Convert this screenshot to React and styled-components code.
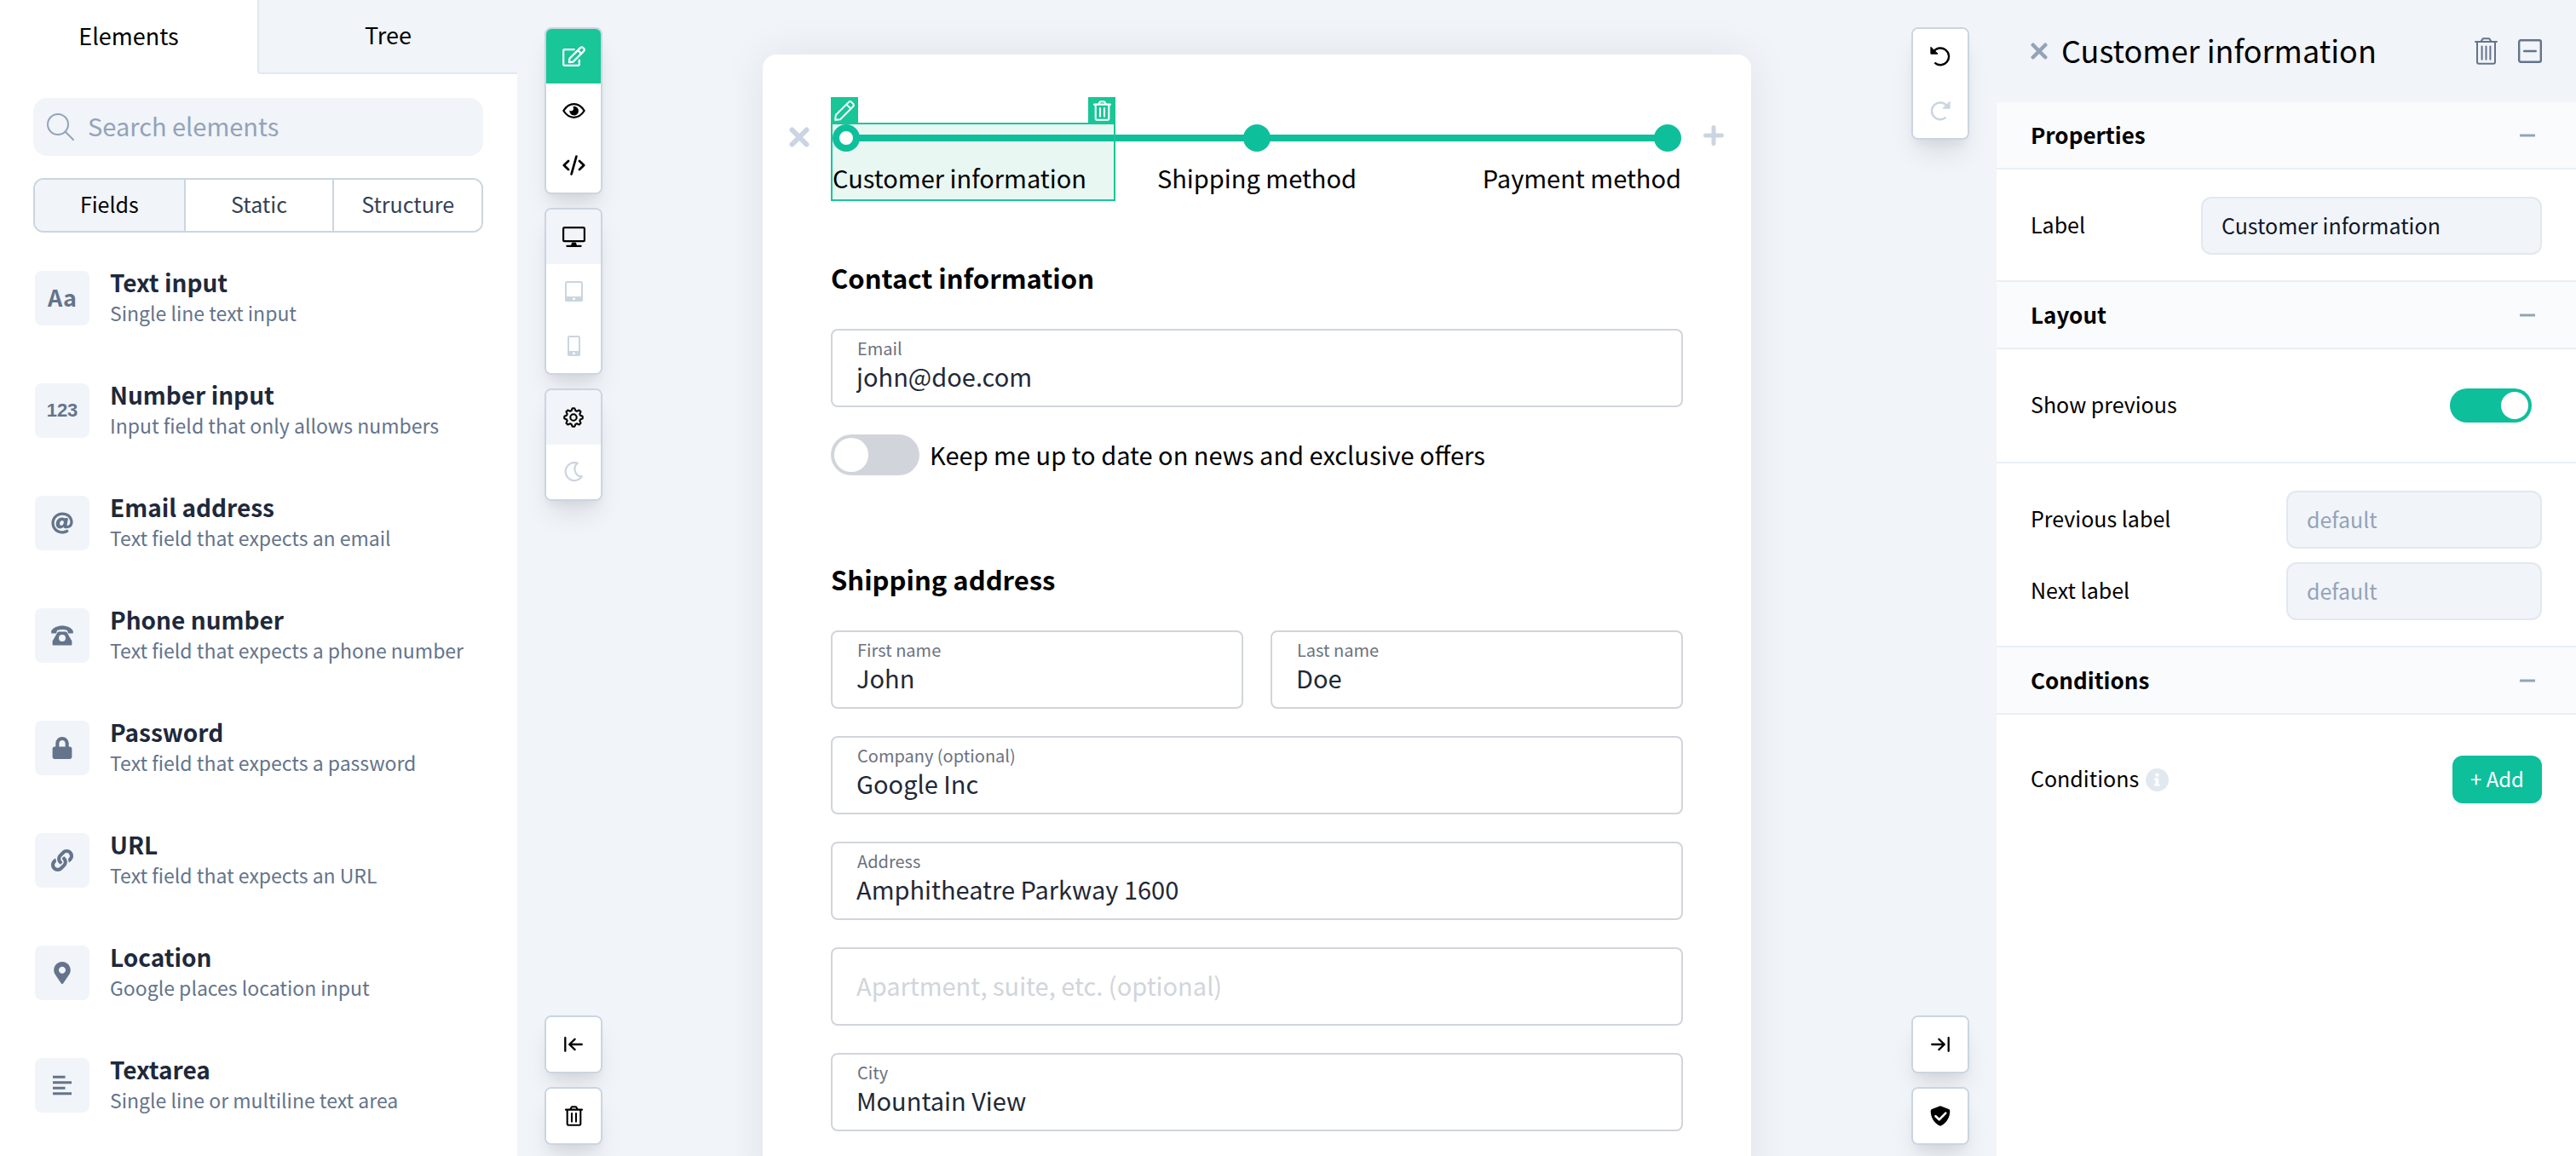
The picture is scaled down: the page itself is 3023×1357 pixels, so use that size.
import React from "react";
import styled, { createGlobalStyle, css } from "styled-components";
import { FaAt, FaLock, FaLink, FaMapMarkerAlt } from "react-icons/fa";

const color = {
  page: "#f1f4f9",
  ink: "#000000",
  title: "#1e293b",
  value: "#1f2937",
  muted: "#64748b",
  soft: "#94a3b8",
  line: "#cbd5e1",
  lineLight: "#e2e8f0",
  divider: "#e9eff5",
  band: "#fafbfd",
  fieldLine: "#d1d5db",
  fieldLabel: "#6b7280",
  brand: "#0ebf9b",
  select: "#18c697",
  selectTint: "#e8f7f2",
};

const GlobalStyle = createGlobalStyle`
  *, *::before, *::after { box-sizing: border-box; }
  body {
    margin: 0;
    background: ${color.page};
    color: ${color.ink};
    font-family: "Noto Sans CJK SC", "Source Sans 3", "Open Sans", sans-serif;
  }
  button, input { font: inherit; color: inherit; margin: 0; }
  button { cursor: pointer; border: 0; padding: 0; background: none; }
  input:focus-visible, button:focus-visible { outline: 2px solid ${color.brand}; }
  svg { display: block; flex: none; }
  h1, h2, ul, ol { margin: 0; padding: 0; }
  ul, ol { list-style: none; }
`;

/* ---------- shell ---------- */

const Shell = styled.div`
  display: grid;
  grid-template-columns: 607px minmax(0, 1fr) 680px;
  height: 100vh;
  overflow: hidden;
`;

const Workspace = styled.main`
  display: flex;
  justify-content: space-between;
  padding: 32px 32px 0;
  overflow: hidden;
`;

/* ---------- left panel ---------- */

const Sidebar = styled.aside`
  background: #fff;
  overflow: hidden;
`;

const Tabs = styled.div`
  display: grid;
  grid-template-columns: 302px 1fr;
  height: 87px;
`;

const Tab = styled.button`
  padding-bottom: 4px;
  font-size: 27px;
  line-height: 40px;
  ${(p) =>
    !p.$active &&
    css`
      background: ${color.page};
      border-left: 2px solid ${color.lineLight};
      border-bottom: 2px solid ${color.lineLight};
      border-bottom-left-radius: 4px;
    `}
`;

const SidebarBody = styled.div`
  padding: 28px 40px 0 39px;
`;

const Search = styled.label`
  display: flex;
  align-items: center;
  gap: 16px;
  height: 68px;
  padding: 0 16px;
  border-radius: 16px;
  background: ${color.page};
  color: ${color.soft};
`;

const SearchInput = styled.input`
  flex: 1;
  min-width: 0;
  padding: 0 0 4px;
  border: 0;
  background: none;
  font-size: 29px;
  &::placeholder { color: ${color.soft}; opacity: 1; }
`;

const Segments = styled.div`
  display: grid;
  grid-template-columns: repeat(3, 1fr);
  height: 64px;
  margin: 26px 0 41px;
  border: 2px solid ${color.line};
  border-radius: 12px;
  overflow: hidden;
`;

const Segment = styled.button`
  padding-bottom: 4px;
  font-size: 25px;
  color: ${(p) => (p.$active ? color.ink : "#334155")};
  background: ${(p) => (p.$active ? color.page : "#fff")};
  & + & { border-left: 2px solid ${color.line}; }
`;

const ElementList = styled.ul`
  display: flex;
  flex-direction: column;
  gap: 60px;
  padding: 0 2px;
`;

const ElementItem = styled.li`
  display: flex;
  align-items: center;
  gap: 24px;
  height: 72px;
`;

const ElementCopy = styled.div`
  padding-bottom: 2px;
`;

const ElementIcon = styled.span`
  display: grid;
  place-items: center;
  flex: none;
  width: 64px;
  height: 64px;
  border-radius: 8px;
  background: ${color.page};
  color: ${color.muted};
`;

const Glyph = styled.span`
  font-family: ${(p) => (p.$digits ? '"Liberation Sans", sans-serif' : "inherit")};
  font-size: ${(p) => (p.$digits ? 22 : 27)}px;
  font-weight: 700;
  line-height: 28px;
  padding-bottom: ${(p) => (p.$digits ? 0 : 2)}px;
`;

const ElementTitle = styled.div`
  font-size: 28px;
  font-weight: 700;
  line-height: 36px;
  color: ${color.title};
`;

const ElementText = styled.div`
  font-size: 23px;
  line-height: 36px;
  color: ${color.muted};
  white-space: nowrap;
`;

/* ---------- floating toolbars ---------- */

const ToolColumn = styled.div`
  display: flex;
  flex-direction: column;
  justify-content: space-between;
  flex: none;
  padding-bottom: 13px;
`;

const ToolStack = styled.div`
  display: flex;
  flex-direction: column;
  gap: 16px;
`;

const ToolGroup = styled.div`
  width: 68px;
  border: 2px solid ${color.line};
  border-radius: 8px;
  background: #fff;
  box-shadow: 0 20px 30px -6px rgba(0, 0, 0, 0.1), 0 8px 12px -4px rgba(0, 0, 0, 0.05);
  overflow: hidden;
`;

const toolTone = {
  plain: css`background: #fff; color: ${color.ink};`,
  current: css`background: ${color.page}; color: ${color.ink};`,
  brand: css`background: ${color.select}; color: #fff;`,
  faded: css`background: #fff; color: ${color.line};`,
};

const Tool = styled.button`
  display: grid;
  place-items: center;
  width: 64px;
  height: 64px;
  ${(p) => toolTone[p.$tone || "plain"]}
`;

/* ---------- form card ---------- */

const Card = styled.form`
  flex: 0 1 1160px;
  align-self: flex-start;
  min-height: 100%;
  margin: 32px 32px 0;
  padding: 80px 0;
  border-radius: 16px;
  background: #fff;
  box-shadow: 0 0 50px rgba(0, 0, 0, 0.08);
`;

const StepperRow = styled.div`
  display: grid;
  grid-template-columns: 80px minmax(0, 1fr) 80px;
  align-items: start;
`;

const StepperButton = styled.button`
  display: grid;
  place-items: center;
  height: 30px;
  color: ${color.line};
  padding: ${(p) => (p.$end ? "0 8px 0 0" : "4px 0 0 6px")};
`;

const Steps = styled.ol`
  position: relative;
  display: grid;
  grid-template-columns: repeat(3, 1fr);
  margin: 2px;
  &::before {
    content: "";
    position: absolute;
    z-index: 1;
    top: 12px;
    left: 16px;
    right: 16px;
    height: 8px;
    background: ${color.brand};
  }
`;

const Step = styled.li`
  position: relative;
  display: flex;
  flex-direction: column;
  align-items: ${(p) => p.$align};
  gap: 10px;
  padding-bottom: 6px;
  font-size: 29px;
  line-height: 40px;
  white-space: nowrap;
  background: ${(p) => (p.$selected ? color.selectTint : "none")};
`;

const Marker = styled.span`
  position: relative;
  z-index: 2;
  width: 32px;
  height: 32px;
  border-radius: 50%;
  border: 8px solid ${color.brand};
  background: ${(p) => (p.$open ? "#fff" : color.brand)};
`;

const Selection = styled.div`
  position: absolute;
  z-index: 3;
  inset: -2px 0 -2px -2px;
  border: 2px solid ${color.select};
`;

const SelectionTag = styled.button`
  position: absolute;
  bottom: 100%;
  ${(p) => p.$side}: -2px;
  display: grid;
  place-items: center;
  width: 32px;
  height: 32px;
  background: ${color.select};
  color: #fff;
`;

const FormBody = styled.div`
  display: flex;
  flex-direction: column;
  gap: 32px;
  padding: 0 80px;
`;

const Section = styled.section`
  padding-top: 70px;
`;

const SectionTitle = styled.h2`
  margin-bottom: 40px;
  font-size: 31px;
  font-weight: 700;
  line-height: 40px;
`;

const Fields = styled.div`
  display: flex;
  flex-direction: column;
  gap: 32px;
`;

const FieldPair = styled.div`
  display: grid;
  grid-template-columns: 1fr 1fr;
  gap: 32px;
`;

const FieldBox = styled.div`
  display: flex;
  flex-direction: column;
  min-width: 0;
  height: 92px;
  padding: ${(p) => (p.$bare ? 0 : 9)}px 28px 0;
  border: 2px solid ${color.fieldLine};
  border-radius: 8px;
`;

const FieldLabel = styled.label`
  padding-left: 1px;
  font-size: 20px;
  line-height: 24px;
  color: ${color.fieldLabel};
`;

const FieldInput = styled.input`
  width: 100%;
  height: ${(p) => (p.$bare ? 84 : 40)}px;
  padding: 0;
  border: 0;
  background: none;
  font-size: 29px;
  color: ${color.value};
  &::placeholder { color: ${color.fieldLine}; opacity: 1; }
`;

const SwitchLine = styled.label`
  display: flex;
  align-items: center;
  gap: 12px;
  height: 48px;
  font-size: 29px;
  line-height: 44px;
`;

const SwitchText = styled.span`
  padding-bottom: 2px;
`;

const Switch = styled.input`
  appearance: none;
  flex: none;
  display: flex;
  width: ${(p) => (p.$small ? 96 : 104)}px;
  height: ${(p) => (p.$small ? 40 : 48)}px;
  padding: 4px;
  border-radius: 24px;
  background: ${color.fieldLine};
  &::before {
    content: "";
    height: 100%;
    aspect-ratio: 1;
    border-radius: 50%;
    background: #fff;
  }
  &:checked {
    justify-content: flex-end;
    background: ${color.brand};
  }
`;

/* ---------- right panel ---------- */

const Inspector = styled.aside`
  background: #fff;
  overflow: hidden;
`;

const InspectorHeader = styled.header`
  display: flex;
  align-items: center;
  height: 120px;
  padding: 0 40px;
  background: ${color.page};
`;

const InspectorTitle = styled.h1`
  flex: 1;
  padding: 0 16px 4px;
  font-size: 36px;
  font-weight: 400;
  line-height: 48px;
`;

const HeaderActions = styled.div`
  display: flex;
  align-items: center;
  gap: 24px;
  color: ${color.muted};
`;

const CloseButton = styled.button`
  color: ${color.soft};
`;

const GroupHeader = styled.div`
  display: flex;
  align-items: center;
  justify-content: space-between;
  padding: 0 48px 0 40px;
  border-bottom: 2px solid ${color.divider};
  background: ${color.band};
  color: ${color.soft};
  * + & { border-top: 2px solid ${color.divider}; }
  header + & { border-top: 0; }
`;

const GroupTitle = styled.h2`
  padding-bottom: 2px;
  font-size: 26px;
  font-weight: 700;
  line-height: 75px;
  color: ${color.ink};
`;

const Group = styled.div`
  display: flex;
  flex-direction: column;
  gap: 16px;
  padding: ${(p) => p.$pad || "32px 40px 30px"};
  & + & { border-top: 2px solid ${color.divider}; }
`;

const Row = styled.div`
  display: flex;
  align-items: center;
  justify-content: space-between;
  min-height: ${(p) => (p.$compact ? 56 : 68)}px;
  padding-right: ${(p) => p.$inset || 0}px;
`;

const RowLabel = styled.label`
  padding-bottom: 4px;
  font-size: 25px;
  line-height: 36px;
`;

const LabelWithInfo = styled.div`
  display: flex;
  align-items: center;
  gap: 8px;
`;

const RowInput = styled.input`
  width: ${(p) => (p.$wide ? 400 : 300)}px;
  height: 68px;
  padding: 0 22px 2px;
  border: 2px solid ${color.lineLight};
  border-radius: 12px;
  background: ${color.page};
  font-size: 25px;
  color: #0f172a;
  &::placeholder { color: ${color.soft}; opacity: 1; }
`;

const AddButton = styled.button`
  height: 56px;
  padding: 0 21px 4px;
  border-radius: 12px;
  background: ${color.brand};
  color: #fff;
  font-size: 24px;
`;

/* ---------- icons ---------- */

const Icon = ({ w, h, sw = 2, children }) => (
  <svg
    width={w}
    height={h}
    viewBox={`0 0 ${w} ${h}`}
    fill="none"
    stroke="currentColor"
    strokeWidth={sw}
    strokeLinecap="round"
    strokeLinejoin="round"
    aria-hidden="true"
  >
    {children}
  </svg>
);

const EditIcon = () => (
  <Icon w={27} h={24} sw={2.2}>
    <path d="M14.6 4.2H2.2a1 1 0 0 0-1 1v16.6a1 1 0 0 0 1 1h16.6a1 1 0 0 0 1-1v-6" strokeLinecap="butt" />
    <path d="M8.4 14.7 21 2.1a2.4 2.4 0 0 1 3.3 0l.7.7a2.4 2.4 0 0 1 0 3.3L12.5 18.6l-4.6.5z" />
    <path d="m18.2 5 3.9 3.9" />
  </Icon>
);

const EyeIcon = () => (
  <Icon w={27} h={18} sw={2.2}>
    <path d="M1.3 9C4.6 3.9 9 1.2 13.5 1.2S22.4 3.9 25.7 9c-3.3 5.1-7.7 7.8-12.2 7.8S4.6 14.1 1.3 9z" />
    <path
      d="M13.8 3.8a5.3 5.3 0 1 1-5.4 4.6 2.6 2.6 0 0 0 3.8-3.8z"
      fill="currentColor"
      stroke="none"
    />
  </Icon>
);

const CodeIcon = () => (
  <Icon w={27} h={24} sw={2.7}>
    <path d="M7 7 1.8 12 7 17M20 7l5.2 5-5.2 5" />
    <path d="M16.4 1.6 10.6 22.4" />
  </Icon>
);

const DesktopIcon = () => (
  <Icon w={27} h={24} sw={2.2}>
    <rect x="1.1" y="1.1" width="24.8" height="16" rx="1.4" />
    <path d="M5.4 22.8h16.2" />
    <path d="M11 22.5 12 19.5h3l1 3z" fill="currentColor" />
  </Icon>
);

const TabletIcon = ({ w = 21 }) => (
  <Icon w={w} h={24} sw={2}>
    <rect x="1" y="1" width={w - 2} height="22" rx="1.6" />
    <path d={`M1 19H${w - 1}V22.5H1z`} fill="currentColor" />
    <path d={`M${w / 2 - 0.6} 20.8h1.2`} stroke="#fff" strokeWidth="2.2" />
  </Icon>
);

const gearPoints = Array.from({ length: 8 }, (_, k) =>
  [
    [-7, 10.8],
    [7, 10.8],
    [17, 8.3],
    [28, 8.3],
  ].map(([offset, radius]) => {
    const a = ((k * 45 + offset) * Math.PI) / 180;
    return `${(12 + radius * Math.cos(a)).toFixed(2)},${(12 + radius * Math.sin(a)).toFixed(2)}`;
  })
)
  .flat()
  .join(" ");

const GearIcon = () => (
  <Icon w={24} h={24} sw={2.1}>
    <polygon points={gearPoints} />
    <circle cx="12" cy="12" r="3.7" />
  </Icon>
);

const MoonIcon = () => (
  <Icon w={22} h={24} sw={2.2}>
    <path d="M15.8 1.7A10.5 10.5 0 1 0 20.9 17.4 8.800 8.800 0 0 1 15.8 1.7z" />
  </Icon>
);

const TurnArrow = () => (
  <>
    <path d="M4.2 6.4A9.9 9.9 0 1 1 5.4 19.6" strokeLinecap="butt" />
    <path d="M.9 1.6v7.6h7.8z" fill="currentColor" strokeWidth="1" />
  </>
);

const UndoIcon = () => (
  <Icon w={24} h={24} sw={2.4}>
    <TurnArrow />
  </Icon>
);

const RedoIcon = () => (
  <Icon w={24} h={24} sw={2.4}>
    <g transform="matrix(-1 0 0 1 24 0)">
      <TurnArrow />
    </g>
  </Icon>
);

const CollapseLeftIcon = () => (
  <Icon w={22} h={18} sw={2.3}>
    <path d="M1.3 1.2v15.6M20.8 9H6.4M12.6 2.9 6.2 9l6.4 6.1" />
  </Icon>
);

const CollapseRightIcon = () => (
  <Icon w={22} h={18} sw={2.3}>
    <path d="M20.7 1.2v15.6M1.2 9h14.4M9.4 2.9 15.8 9l-6.4 6.1" />
  </Icon>
);

const TrashIcon = () => (
  <Icon w={21} h={24} sw={2.1}>
    <path d="M1 4.6h19M6.2 4.2 8 1.3h5l1.8 2.9M2.7 4.8v16.6a1.4 1.4 0 0 0 1.4 1.4h12.8a1.4 1.4 0 0 0 1.4-1.4V4.8" />
    <path d="M8 9v9.6M13 9v9.6" />
  </Icon>
);

const ThinTrashIcon = () => (
  <Icon w={27} h={32} sw={2}>
    <path d="M1 5h25M7.6 4.6 9.8 1.2h7.4l2.2 3.4M3 5.4v23.4a2 2 0 0 0 2 2h17a2 2 0 0 0 2-2V5.4" />
    <path d="M8.6 10.4v15.4M13.5 10.4v15.4M18.4 10.4v15.4" />
  </Icon>
);

const MinusBoxIcon = () => (
  <Icon w={28} h={28} sw={2.4}>
    <rect x="1.2" y="1.2" width="25.6" height="25.6" rx="2" />
    <path d="M7.200 14h13.600" />
  </Icon>
);

const PencilIcon = () => (
  <Icon w={24} h={24} sw={2}>
    <path d="M1.2 22.8 1.8 17 17 1.9a2.3 2.3 0 0 1 3.2 0l1.9 1.9a2.3 2.3 0 0 1 0 3.2L7 22.2z" />
    <path d="m14.4 4.6 5 5" />
  </Icon>
);

const ShieldIcon = () => (
  <Icon w={24} h={24} sw={2.6}>
    <path
      d="M12.9.4 21.9 4.1a2.2 2.2 0 0 1 1.4 2.1c0 8.2-4.8 14.6-10.4 17.2a2.3 2.3 0 0 1-1.8 0C5.500 20.800.7 14.400.7 6.200a2.200 2.200 0 0 1 1.400-2.100L11.100.4a2.300 2.300 0 0 1 1.800 0z"
      fill="currentColor"
      stroke="none"
    />
    <path d="m6.500 12.200 4.200 4.100 7.600-7.700" stroke="#fff" />
  </Icon>
);

const CrossIcon = ({ size, sw }) => {
  const a = sw / 2 + 0.5;
  const b = size - a;
  return (
    <Icon w={size} h={size} sw={sw}>
      <path d={`M${a} ${a} ${b} ${b}M${b} ${a} ${a} ${b}`} />
    </Icon>
  );
};

const PlusIcon = () => (
  <Icon w={24} h={24} sw={5}>
    <path d="M12 2.600v18.800M2.600 12h18.800" />
  </Icon>
);

const MinusIcon = () => (
  <Icon w={18} h={4} sw={3}>
    <path d="M0 2h18" strokeLinecap="butt" />
  </Icon>
);

const SearchIcon = () => (
  <Icon w={32} h={32} sw={2}>
    <circle cx="13" cy="13" r="12" />
    <path d="m21.800 21.800 9.200 9.200" />
  </Icon>
);

const PhoneIcon = () => (
  <svg width="26" height="24" viewBox="0 0 26 24" fill="currentColor" fillRule="evenodd" aria-hidden="true">
    <path d="M.2 9V6.800C2.400 2.600 7.600.5 13 .5s10.600 2.100 12.800 6.300V9a.6.6 0 0 1-.6.6h-4.600a.8.8 0 0 1-.8-.6l-.8-3c-4-1.400-8-1.400-12 0l-.8 3a.8.8 0 0 1-.8.6H.8A.6.6 0 0 1 .2 9z" />
    <path d="M9.200 7.400h7.600c.8 0 1.400.4 1.800 1l5.500 9.600c.2.400.3.800.3 1.200v3.200c0 .6-.5 1.100-1.100 1.100H2.700c-.6 0-1.100-.5-1.100-1.100v-3.200c0-.4.1-.8.3-1.200l5.500-9.600c.4-.6 1-1 1.800-1zM13 11a4 4 0 1 0 0 8 4 4 0 0 0 0-8z" />
  </svg>
);

const AlignIcon = () => (
  <Icon w={22} h={24} sw={3}>
    <path d="M0 2.200h14.500M0 8.700h22M0 15.200h14.500M0 21.700h22" strokeLinecap="butt" />
  </Icon>
);

const InfoIcon = () => (
  <svg width="27" height="27" viewBox="0 0 27 27" aria-hidden="true">
    <circle cx="13.500" cy="13.500" r="13.500" fill={color.lineLight} />
    <circle cx="13.500" cy="7.800" r="2.200" fill="#fff" />
    <path d="M10.200 11.400h5v7h1.300v2.400h-6.300v-2.400h1.400v-4.600h-1.400z" fill="#fff" />
  </svg>
);

/* ---------- data ---------- */

const elements = [
  { title: "Text input", text: "Single line text input", icon: <Glyph>Aa</Glyph> },
  { title: "Number input", text: "Input field that only allows numbers", icon: <Glyph $digits>123</Glyph> },
  { title: "Email address", text: "Text field that expects an email", icon: <FaAt size={26} /> },
  { title: "Phone number", text: "Text field that expects a phone number", icon: <PhoneIcon /> },
  { title: "Password", text: "Text field that expects a password", icon: <FaLock size={26} /> },
  { title: "URL", text: "Text field that expects an URL", icon: <FaLink size={26} /> },
  { title: "Location", text: "Google places location input", icon: <FaMapMarkerAlt size={26} /> },
  { title: "Textarea", text: "Single line or multiline text area", icon: <AlignIcon /> },
];

/* ---------- composed parts ---------- */

function Field({ id, label, value, placeholder }) {
  return (
    <FieldBox $bare={!label}>
      {label && <FieldLabel htmlFor={id}>{label}</FieldLabel>}
      <FieldInput
        id={id}
        $bare={!label}
        defaultValue={value}
        placeholder={placeholder}
        aria-label={label ? undefined : placeholder}
      />
    </FieldBox>
  );
}

function PropertyHeader({ children }) {
  return (
    <GroupHeader>
      <GroupTitle>{children}</GroupTitle>
      <button type="button" aria-label={`Collapse ${children}`}>
        <MinusIcon />
      </button>
    </GroupHeader>
  );
}

function ToolButton({ label, tone, children }) {
  return (
    <Tool type="button" aria-label={label} $tone={tone}>
      {children}
    </Tool>
  );
}

export default function App() {
  return (
    <>
      <GlobalStyle />
      <Shell>
        <Sidebar>
          <Tabs>
            <Tab type="button" $active>Elements</Tab>
            <Tab type="button">Tree</Tab>
          </Tabs>
          <SidebarBody>
            <Search>
              <SearchIcon />
              <SearchInput placeholder="Search elements" aria-label="Search elements" />
            </Search>
            <Segments>
              <Segment type="button" $active>Fields</Segment>
              <Segment type="button">Static</Segment>
              <Segment type="button">Structure</Segment>
            </Segments>
            <ElementList>
              {elements.map((item) => (
                <ElementItem key={item.title}>
                  <ElementIcon>{item.icon}</ElementIcon>
                  <ElementCopy>
                    <ElementTitle>{item.title}</ElementTitle>
                    <ElementText>{item.text}</ElementText>
                  </ElementCopy>
                </ElementItem>
              ))}
            </ElementList>
          </SidebarBody>
        </Sidebar>

        <Workspace>
          <ToolColumn>
            <ToolStack>
              <ToolGroup>
                <ToolButton label="Edit" tone="brand"><EditIcon /></ToolButton>
                <ToolButton label="Preview"><EyeIcon /></ToolButton>
                <ToolButton label="Code"><CodeIcon /></ToolButton>
              </ToolGroup>
              <ToolGroup>
                <ToolButton label="Desktop" tone="current"><DesktopIcon /></ToolButton>
                <ToolButton label="Tablet" tone="faded"><TabletIcon /></ToolButton>
                <ToolButton label="Mobile" tone="faded"><TabletIcon w={15} /></ToolButton>
              </ToolGroup>
              <ToolGroup>
                <ToolButton label="Settings" tone="current"><GearIcon /></ToolButton>
                <ToolButton label="Dark mode" tone="faded"><MoonIcon /></ToolButton>
              </ToolGroup>
            </ToolStack>
            <ToolStack>
              <ToolGroup>
                <ToolButton label="Collapse left panel"><CollapseLeftIcon /></ToolButton>
              </ToolGroup>
              <ToolGroup>
                <ToolButton label="Clear form"><TrashIcon /></ToolButton>
              </ToolGroup>
            </ToolStack>
          </ToolColumn>

          <Card>
            <StepperRow>
              <StepperButton type="button" aria-label="Remove steps">
                <CrossIcon size={24} sw={6} />
              </StepperButton>
              <Steps>
                <Step $align="flex-start" $selected>
                  <Marker $open />
                  <span>Customer information</span>
                  <Selection>
                    <SelectionTag type="button" aria-label="Edit step" $side="left">
                      <PencilIcon />
                    </SelectionTag>
                    <SelectionTag type="button" aria-label="Delete step" $side="right">
                      <TrashIcon />
                    </SelectionTag>
                  </Selection>
                </Step>
                <Step $align="center">
                  <Marker />
                  <span>Shipping method</span>
                </Step>
                <Step $align="flex-end">
                  <Marker />
                  <span>Payment method</span>
                </Step>
              </Steps>
              <StepperButton type="button" aria-label="Add step" $end>
                <PlusIcon />
              </StepperButton>
            </StepperRow>

            <FormBody>
              <Section>
                <SectionTitle>Contact information</SectionTitle>
                <Fields>
                  <Field id="email" label="Email" value="john@doe.com" />
                  <SwitchLine>
                    <Switch type="checkbox" />
                    <SwitchText>Keep me up to date on news and exclusive offers</SwitchText>
                  </SwitchLine>
                </Fields>
              </Section>
              <Section>
                <SectionTitle>Shipping address</SectionTitle>
                <Fields>
                  <FieldPair>
                    <Field id="first-name" label="First name" value="John" />
                    <Field id="last-name" label="Last name" value="Doe" />
                  </FieldPair>
                  <Field id="company" label="Company (optional)" value="Google Inc" />
                  <Field id="address" label="Address" value="Amphitheatre Parkway 1600" />
                  <Field id="apartment" placeholder="Apartment, suite, etc. (optional)" />
                  <Field id="city" label="City" value="Mountain View" />
                </Fields>
              </Section>
            </FormBody>
          </Card>

          <ToolColumn>
            <ToolGroup>
              <ToolButton label="Undo"><UndoIcon /></ToolButton>
              <ToolButton label="Redo" tone="faded"><RedoIcon /></ToolButton>
            </ToolGroup>
            <ToolStack>
              <ToolGroup>
                <ToolButton label="Collapse right panel"><CollapseRightIcon /></ToolButton>
              </ToolGroup>
              <ToolGroup>
                <ToolButton label="Validation"><ShieldIcon /></ToolButton>
              </ToolGroup>
            </ToolStack>
          </ToolColumn>
        </Workspace>

        <Inspector>
          <InspectorHeader>
            <CloseButton type="button" aria-label="Close">
              <CrossIcon size={20} sw={4.5} />
            </CloseButton>
            <InspectorTitle>Customer information</InspectorTitle>
            <HeaderActions>
              <button type="button" aria-label="Delete"><ThinTrashIcon /></button>
              <button type="button" aria-label="Collapse all"><MinusBoxIcon /></button>
            </HeaderActions>
          </InspectorHeader>

          <PropertyHeader>Properties</PropertyHeader>
          <Group>
            <Row>
              <RowLabel htmlFor="step-label">Label</RowLabel>
              <RowInput id="step-label" $wide defaultValue="Customer information" />
            </Row>
          </Group>

          <PropertyHeader>Layout</PropertyHeader>
          <Group $pad="32px 40px">
            <Row $inset={12}>
              <RowLabel htmlFor="show-previous">Show previous</RowLabel>
              <Switch id="show-previous" type="checkbox" $small defaultChecked />
            </Row>
          </Group>
          <Group>
            <Row>
              <RowLabel htmlFor="previous-label">Previous label</RowLabel>
              <RowInput id="previous-label" placeholder="default" />
            </Row>
            <Row>
              <RowLabel htmlFor="next-label">Next label</RowLabel>
              <RowInput id="next-label" placeholder="default" />
            </Row>
          </Group>

          <PropertyHeader>Conditions</PropertyHeader>
          <Group $pad="48px 40px">
            <Row $compact>
              <LabelWithInfo>
                <RowLabel as="span">Conditions</RowLabel>
                <InfoIcon />
              </LabelWithInfo>
              <AddButton type="button">+ Add</AddButton>
            </Row>
          </Group>
        </Inspector>
      </Shell>
    </>
  );
}
